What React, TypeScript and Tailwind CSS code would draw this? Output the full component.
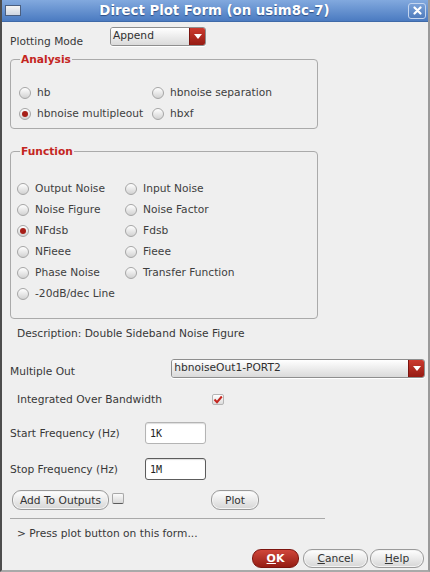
import type { ReactNode } from "react";

const font = { fontFamily: '"DejaVu Sans", "Liberation Sans", sans-serif' };

function Radio({ checked }: { checked?: boolean }) {
  return (
    <span className="w-[12px] h-[12px] shrink-0 rounded-full border border-[#a6a6a6] bg-linear-to-b from-white to-[#d2d2d2] flex items-center justify-center">
      {checked && <span className="w-[6px] h-[6px] rounded-full bg-[#a61e17]" />}
    </span>
  );
}

function RadioItem({ label, checked }: { label: string; checked?: boolean }) {
  return (
    <div className="h-[21px] flex items-center gap-[6px] text-[#3e3e3e]">
      <Radio checked={checked} />
      <span className="whitespace-nowrap">{label}</span>
    </div>
  );
}

function Arrow() {
  return (
    <svg width="8" height="5" viewBox="0 0 8 5">
      <polygon points="0,0 8,0 4,5" fill="#ffffff" />
    </svg>
  );
}

function Combo({ value, width }: { value: string; width: string }) {
  return (
    <div className={`flex h-[19px] ${width} rounded-[3px] border border-[#8e8e8e] overflow-hidden shadow-[0_1px_0_#fff]`}>
      <div className="flex-1 bg-linear-to-b from-white to-[#dadada] pl-[2px] leading-[16px] text-[#303030] whitespace-nowrap">
        {value}
      </div>
      <div className="w-[16px] bg-linear-to-b from-[#cc3a2e] to-[#961b13] border-l border-[#7a1510] flex items-center justify-center">
        <Arrow />
      </div>
    </div>
  );
}

function Button({ children, className = "" }: { children: ReactNode; className?: string }) {
  return (
    <div
      className={`rounded-[9px] border border-[#9a9a9a] bg-linear-to-b from-white to-[#d6d6d6] flex items-center justify-center text-[#333] shadow-[inset_0_0_0_1px_#f4f4f4] ${className}`}
    >
      {children}
    </div>
  );
}

function Group({ title, children, className = "" }: { title: string; children: ReactNode; className?: string }) {
  return (
    <fieldset className="w-[308px] border border-[#aaaaaa] rounded-[4px] p-0 m-0">
      <legend className="ml-[9px] px-[1px] font-bold text-[#c4261f] leading-[13px]">{title}</legend>
      <div className={className}>{children}</div>
    </fieldset>
  );
}

export default function App() {
  return (
    <div style={font} className="w-[430px] h-[572px] flex flex-col bg-[#efefef] text-[10.67px] leading-[13px] border-l-2 border-l-[#4d4d4d] border-r-2 border-r-[#9a9a9a] border-b-2 border-b-[#a9a9a9]">
      {/* Title bar */}
      <div className="h-[22px] shrink-0 flex items-center bg-linear-to-b from-[#82a9de] to-[#4b7bc1] border-b border-[#3f6aa8]">
        <div className="ml-[3px] w-[16px] h-[11px] border border-[#4b5f80] bg-linear-to-b from-[#f4f4f4] to-[#cfd6e2]" />
        <div className="flex-1 text-center text-white font-bold text-[13.3px] leading-[16px] [text-shadow:0_1px_1px_#2d4f85]">
          Direct Plot Form (on usim8c-7)
        </div>
        <div className="mr-[2px] w-[18px] h-[16px] rounded-[3px] border border-[#c4d5ef] bg-linear-to-b from-[#7aa1d8] to-[#4f7cbd] flex items-center justify-center">
          <svg width="9" height="9" viewBox="0 0 9 9">
            <path d="M1.5 1.5 L7.5 7.5 M7.5 1.5 L1.5 7.5" stroke="#ffffff" strokeWidth="2.2" strokeLinecap="round" />
          </svg>
        </div>
      </div>

      {/* Body */}
      <div className="flex-1 flex flex-col pl-[8px] pr-[3px] text-[#383838]">
        <div className="flex mt-[5px]">
          <span className="w-[100px] mt-[8px]">Plotting Mode</span>
          <Combo value="Append" width="w-[96px]" />
        </div>

        <div className="mt-[5px]">
          <Group title="Analysis" className="pl-[8px] pt-[16px] pb-[4px]">
            <div className="grid grid-cols-[133px_1fr]">
              <RadioItem label="hb" />
              <RadioItem label="hbnoise separation" />
              <RadioItem label="hbnoise multipleout" checked />
              <RadioItem label="hbxf" />
            </div>
          </Group>
        </div>

        <div className="mt-[16px]">
          <Group title="Function" className="pl-[6px] pt-[20px] pb-[14px]">
            <div className="grid grid-cols-[108px_1fr]">
              <RadioItem label="Output Noise" />
              <RadioItem label="Input Noise" />
              <RadioItem label="Noise Figure" />
              <RadioItem label="Noise Factor" />
              <RadioItem label="NFdsb" checked />
              <RadioItem label="Fdsb" />
              <RadioItem label="NFieee" />
              <RadioItem label="Fieee" />
              <RadioItem label="Phase Noise" />
              <RadioItem label="Transfer Function" />
              <RadioItem label="-20dB/dec Line" />
            </div>
          </Group>
        </div>

        <div className="mt-[8px] pl-[7px]">Description: Double Sideband Noise Figure</div>

        <div className="flex mt-[19px]">
          <span className="w-[162px] mt-[6px]">Multiple Out</span>
          <Combo value="hbnoiseOut1-PORT2" width="w-[255px]" />
        </div>

        <div className="flex items-center mt-[15px] h-[13px]">
          <span className="w-[202px] pl-[7px]">Integrated Over Bandwidth</span>
          <div className="w-[12px] h-[11px] rounded-[2px] border border-[#b5b5b5] bg-linear-to-b from-white to-[#dcdcdc] flex items-center justify-center">
            <svg width="10" height="9" viewBox="0 0 10 9">
              <path d="M1.5 4.5 L4 7.2 L8.8 1.5" stroke="#c4261f" strokeWidth="2" fill="none" />
            </svg>
          </div>
        </div>

        <div className="flex items-center mt-[16px]">
          <span className="w-[135px]">Start Frequency (Hz)</span>
          <div className="w-[61px] h-[22px] rounded-[3px] border border-[#b4b4b4] bg-white pl-[4px] flex items-center shadow-[inset_0_1px_1px_#ddd] font-['DejaVu_Sans_Mono',monospace] text-[10px] text-[#222]">
            1K
          </div>
        </div>

        <div className="flex items-center mt-[14px]">
          <span className="w-[135px]">Stop Frequency (Hz)</span>
          <div className="w-[61px] h-[22px] rounded-[3px] border border-[#5c5c5c] bg-white pl-[4px] flex items-center shadow-[inset_0_1px_1px_#ddd] font-['DejaVu_Sans_Mono',monospace] text-[10px] text-[#222]">
            1M
          </div>
        </div>

        <div className="flex items-start mt-[10px]">
          <Button className="ml-[2px] w-[97px] h-[20px]">Add To Outputs</Button>
          <div className="ml-[3px] mt-[3px] w-[12px] h-[11px] rounded-[2px] border border-[#a8a8a8] border-b-[#5a5a5a] bg-linear-to-b from-[#fbfbfb] to-[#d8d8d8]" />
          <Button className="ml-[87px] w-[48px] h-[20px]">Plot</Button>
        </div>

        <div className="mt-[8px] h-px w-[315px] bg-[#a9a9a9]" />

        <div className="mt-[8px] pl-[7px]">&gt; Press plot button on this form...</div>

        <div className="flex justify-end mt-[9px] mr-[1px]">
          <div className="h-[19px] w-[47px] rounded-[9px] border border-[#7c150f] bg-linear-to-b from-[#d0463a] to-[#951c13] flex items-center justify-center text-white font-bold text-[11px]">
            <span>
              <span className="underline">O</span>K
            </span>
          </div>
          <Button className="ml-[4px] w-[65px] h-[19px]">
            <span>
              <span className="underline">C</span>ancel
            </span>
          </Button>
          <Button className="ml-[2px] w-[54px] h-[19px]">
            <span>
              <span className="underline">H</span>elp
            </span>
          </Button>
        </div>
      </div>
    </div>
  );
}
